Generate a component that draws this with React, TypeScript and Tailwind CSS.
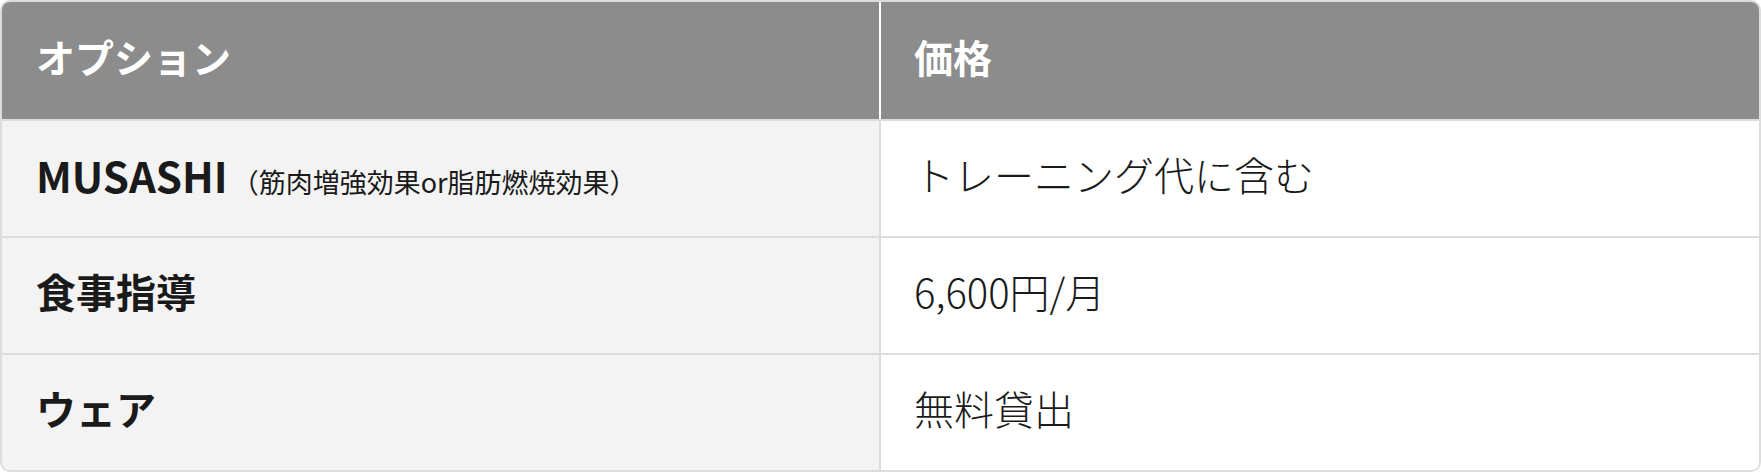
const rows = [
  { name: "MUSASHI", note: "（筋肉増強効果or脂肪燃焼効果）", price: "トレーニング代に含む" },
  { name: "食事指導", price: "6,600円/月" },
  { name: "ウェア", price: "無料貸出" },
];

export default function App() {
  return (
    <div className="w-[1761px] h-[472px] bg-white font-['Noto_Sans_CJK_JP',sans-serif] text-[#1a1a1a]">
      <div className="h-full grid grid-cols-[879px_1fr] grid-rows-4 rounded-[10px] border-2 border-[#dcdcdc] overflow-hidden">
        <div className="bg-[#8c8c8c] border-r-2 border-white flex items-center pl-[34px] pb-[9px] text-[39px] font-bold text-white">
          オプション
        </div>
        <div className="bg-[#8c8c8c] flex items-center pl-[33px] pb-[9px] text-[39px] font-bold text-white">
          価格
        </div>
        {rows.map((row) => (
          <>
            <div
              key={row.name}
              className="bg-[#f3f3f3] border-t-2 border-r-2 border-[#dcdcdc] flex items-center pl-[34px] pb-[9px]"
            >
              <div className="flex items-baseline">
                <span className={row.note ? "text-[42px] font-bold" : "text-[40px] font-bold"}>{row.name}</span>
                {row.note && <span className="ml-1 text-[27px]">{row.note}</span>}
              </div>
            </div>
            <div
              key={row.name + "-price"}
              className="bg-white border-t-2 border-[#dcdcdc] flex items-center pl-[33px] pb-[9px] text-[40px] font-light"
            >
              {row.price}
            </div>
          </>
        ))}
      </div>
    </div>
  );
}
